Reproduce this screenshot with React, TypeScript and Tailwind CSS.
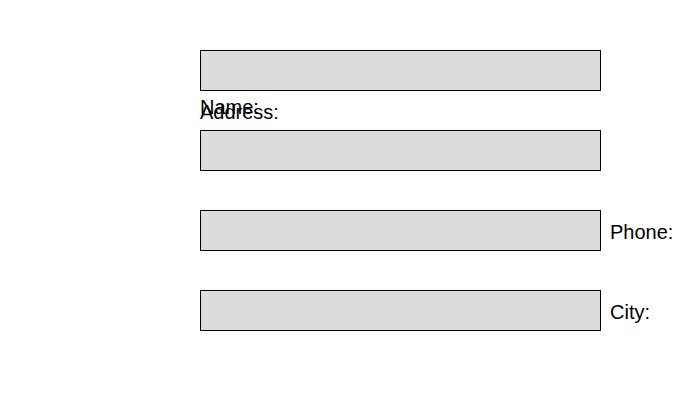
import React from "react";

const box =
  "block h-[41px] min-w-0 flex-1 rounded-none border border-black bg-[#dcdcdc] px-2 text-xl text-black outline-none";
const text = "text-xl leading-6 text-black";
const sideLabel = `${text} w-[99px] pt-0.5 pl-[9px]`;

export default function App() {
  return (
    <form className="flex flex-col pt-[50px] pl-[200px] font-['Liberation_Sans',Arial,sans-serif]">
      <div className="mr-[99px] flex flex-col">
        <div className="flex">
          <input id="name" type="text" className={box} />
        </div>
        <div className="grid h-[39px] pt-1">
          <label htmlFor="name" className={`${text} col-start-1 row-start-1 self-start`}>
            Name:
          </label>
          <label htmlFor="address" className={`${text} col-start-1 row-start-1 mt-[5px] self-start`}>
            Address:
          </label>
        </div>
        <div className="flex">
          <input id="address" type="text" className={box} />
        </div>
      </div>
      <div className="mt-[39px] flex flex-col gap-[39px]">
        <div className="flex items-center">
          <input id="phone" type="text" className={box} />
          <label htmlFor="phone" className={sideLabel}>
            Phone:
          </label>
        </div>
        <div className="flex items-center">
          <input id="city" type="text" className={box} />
          <label htmlFor="city" className={sideLabel}>
            City:
          </label>
        </div>
      </div>
    </form>
  );
}
